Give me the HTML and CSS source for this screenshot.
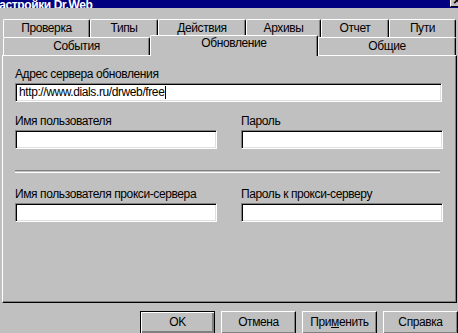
FILE: index.html
```html
<!DOCTYPE html>
<html lang="ru">
<head>
<meta charset="utf-8">
<title>Настройки Dr.Web</title>
<link rel="stylesheet" href="styles.css">
</head>
<body>
<div class="titlebar">
  <span class="title">Настройки Dr.Web</span>
  <span class="close">×</span>
</div>
<div class="dialog">
  <div class="tabrow back">
    <div class="tab w-proverka">Проверка</div>
    <div class="tab w-tipy">Типы</div>
    <div class="tab w-deistviya">Действия</div>
    <div class="tab w-arhivy">Архивы</div>
    <div class="tab w-otchet">Отчет</div>
    <div class="tab w-puti">Пути</div>
  </div>
  <div class="tabrow front">
    <div class="tab w-sobytiya">События</div>
    <div class="tab active w-obnovlenie">Обновление</div>
    <div class="tab w-obshie">Общие</div>
  </div>
  <div class="panel">
    <div class="field">
      <div class="label">Адрес сервера обновления</div>
      <div class="input">http://www.dials.ru/drweb/free<span class="caret"></span></div>
    </div>
    <div class="cols gap-top">
      <div class="field">
        <div class="label">Имя пользователя</div>
        <div class="input"></div>
      </div>
      <div class="field">
        <div class="label">Пароль</div>
        <div class="input"></div>
      </div>
    </div>
    <div class="separator"></div>
    <div class="cols">
      <div class="field">
        <div class="label">Имя пользователя прокси-сервера</div>
        <div class="input"></div>
      </div>
      <div class="field">
        <div class="label">Пароль к прокси-серверу</div>
        <div class="input"></div>
      </div>
    </div>
  </div>
  <div class="buttons">
    <div class="btn default">OK</div>
    <div class="btn">Отмена</div>
    <div class="btn">При<u>м</u>енить</div>
    <div class="btn">Справка</div>
  </div>
</div>
</body>
</html>
```
FILE: styles.css
```css
html, body {
  margin: 0;
  padding: 0;
}
body {
  width: 458px;
  height: 333px;
  overflow: hidden;
  background: #c0c0c0;
  font-family: "Liberation Sans", Arial, sans-serif;
  font-size: 12px;
  letter-spacing: -0.4px;
  color: #000;
}
.titlebar {
  height: 8px;
  background: #000080;
  overflow: hidden;
  display: flex;
  justify-content: space-between;
  align-items: flex-end;
}
.title {
  color: #fff;
  font-weight: bold;
  font-size: 12px;
  line-height: 14px;
  margin-left: -9px;
  margin-bottom: -4px;
  white-space: nowrap;
}
.close {
  flex-shrink: 0;
  width: 14px;
  height: 14px;
  margin-right: -6px;
  margin-bottom: 1px;
  box-sizing: border-box;
  background: #c0c0c0;
  border-top: 1px solid #fff;
  border-left: 1px solid #fff;
  border-right: 1px solid #000;
  border-bottom: 1px solid #000;
  font-size: 14px;
  line-height: 12px;
  font-weight: bold;
  text-align: center;
  letter-spacing: 0;
}
.dialog {
  padding: 11px 0 0 2px;
}
.tabrow {
  display: flex;
  height: 18px;
}
.back {
  margin-left: 1px;
}
.front {
  margin-left: 1px;
  position: relative;
  z-index: 1;
}
.tab {
  box-sizing: border-box;
  height: 18px;
  border-top: 1px solid #fff;
  border-left: 1px solid #fff;
  border-right: 1px solid #000;
  border-radius: 2px 2px 0 0;
  box-shadow: inset -1px 0 #808080;
  text-align: center;
  line-height: 16px;
  white-space: nowrap;
}
.tab.active {
  height: 21px;
  margin-top: -2px;
  background: #c0c0c0;
  line-height: 15px;
}
.w-proverka { width: 87px; }
.w-tipy { width: 68px; }
.w-deistviya { width: 88px; }
.w-arhivy { width: 75px; }
.w-otchet { width: 68px; }
.w-puti { width: 67px; }
.w-sobytiya { width: 147px; }
.w-obnovlenie { width: 168px; }
.w-obshie { width: 138px; }
.panel {
  box-sizing: border-box;
  width: 455px;
  height: 248px;
  border-top: 1px solid #fff;
  border-left: 1px solid #fff;
  border-right: 1px solid #000;
  border-bottom: 1px solid #000;
  box-shadow: inset -1px -1px #808080;
  padding: 11px 14px 0 12px;
}
.label {
  line-height: 14px;
  height: 14px;
  margin-bottom: 2px;
  white-space: nowrap;
}
.input {
  box-sizing: border-box;
  height: 19px;
  background: #fff;
  border-top: 1px solid #808080;
  border-left: 1px solid #808080;
  border-right: 1px solid #fff;
  border-bottom: 1px solid #fff;
  box-shadow: inset 1px 1px #000, inset -1px -1px #dfdfdf;
  padding: 0 3px;
  line-height: 17px;
  white-space: nowrap;
  display: flex;
  align-items: center;
}
.caret {
  display: inline-block;
  width: 1px;
  height: 13px;
  background: #000;
  margin-left: 1px;
}
.cols {
  display: grid;
  grid-template-columns: 202px 202px;
  column-gap: 24px;
}
.gap-top {
  margin-top: 12px;
}
.separator {
  height: 1px;
  margin: 21px 2px 14px 0;
  border-top: 1px solid #808080;
  border-bottom: 1px solid #fff;
}
.buttons {
  display: flex;
  justify-content: flex-end;
  gap: 6px;
  margin-top: 8px;
}
.btn {
  box-sizing: border-box;
  width: 75px;
  height: 23px;
  border-top: 1px solid #fff;
  border-left: 1px solid #fff;
  border-right: 1px solid #000;
  border-bottom: 1px solid #000;
  box-shadow: inset -1px -1px #808080;
  text-align: center;
  line-height: 21px;
}
.btn.default {
  border: 1px solid #000;
  box-shadow: inset 1px 1px #fff, inset -2px -2px #808080;
}
```
